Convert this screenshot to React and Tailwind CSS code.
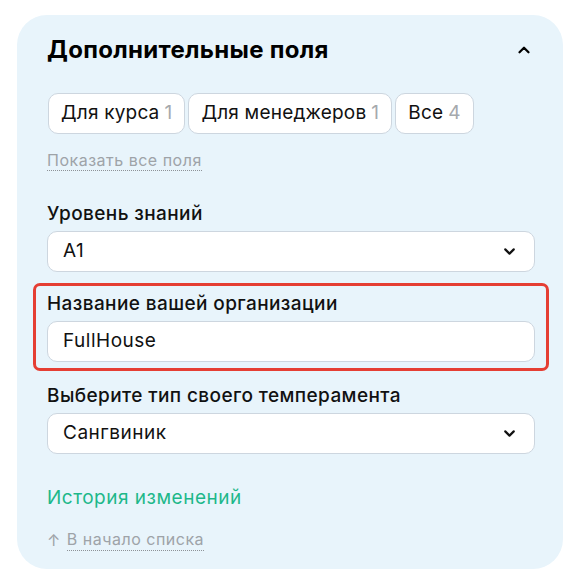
import { ChevronDown, ChevronUp } from "lucide-react";

const chips = [
    { label: "Для курса", count: 1 },
    { label: "Для менеджеров", count: 1 },
    { label: "Все", count: 4 },
];

function Select({ value }) {
    return (
        <div className="h-[41px] rounded-[10px] bg-white border border-[#cdd6df] flex items-center justify-between pl-[15px] pr-[16px]">
            <span className="text-[19px] tracking-[0.5px] text-[#111]">{value}</span>
            <ChevronDown size={17} strokeWidth={3} className="text-[#111]" />
        </div>
    );
}

function Field({ label, children }) {
    return (
        <div className="flex flex-col gap-[5px]">
            <label className="text-[19px] leading-[24px] tracking-[0.4px] font-medium text-[#111]">{label}</label>
            {children}
        </div>
    );
}

export default function App() {
    return (
        <div className="min-h-screen bg-white pt-[15px] pl-[17px]" style={{ fontFamily: "Inter, 'Noto Sans', sans-serif" }}>
            <div className="w-[546px] h-[554px] rounded-[30px] bg-[#e8f4fb] pl-[30px] pr-[28px] pt-[20px]">
                <div className="flex items-center justify-between">
                    <h2 className="text-[24px] leading-[30px] tracking-[0.3px] font-bold text-black">Дополнительные поля</h2>
                    <ChevronUp size={18} strokeWidth={3} className="text-black mr-[2px]" />
                </div>

                <div className="flex gap-[3px] mt-[28px] ml-[1px]">
                    {chips.map((c) => (
                        <button
                            key={c.label}
                            className="h-[41px] px-[12px] rounded-[10px] bg-white border border-[#cdd6df] text-[19px] tracking-[0.2px] text-[#111] flex items-center gap-[5px]"
                        >
                            {c.label}
                            <span className="text-[#a5a9ad]">{c.count}</span>
                        </button>
                    ))}
                </div>

                <div className="mt-[14px]">
                    <span className="text-[16px] leading-[22px] tracking-[0.5px] text-[#9ea3a8] border-b border-dotted border-[#8d9297]">
                        Показать все поля
                    </span>
                </div>

                <div className="mt-[30px]">
                    <Field label="Уровень знаний">
                        <Select value="A1" />
                    </Field>
                </div>

                <div className="mt-[11px] -mx-[14px] border-[3px] border-[#e53e33] rounded-[7px] px-[11px] pt-[6px] pb-[6px]">
                    <Field label="Название вашей организации">
                        <div className="h-[41px] rounded-[10px] bg-white border border-[#cdd6df] flex items-center pl-[15px]">
                            <span className="text-[19px] tracking-[0.5px] text-[#111]">FullHouse</span>
                        </div>
                    </Field>
                </div>

                <div className="mt-[13px]">
                    <Field label="Выберите тип своего темперамента">
                        <Select value="Сангвиник" />
                    </Field>
                </div>

                <div className="mt-[32px] text-[19px] leading-[24px] tracking-[0.5px] text-[#1db88a]">История изменений</div>

                <div className="mt-[18px] flex items-center gap-[6px] text-[16px] leading-[22px] tracking-[0.5px] text-[#9ea3a8]">
                    <span>↑</span>
                    <span className="border-b border-dotted border-[#8d9297]">В начало списка</span>
                </div>
            </div>
        </div>
    );
}
